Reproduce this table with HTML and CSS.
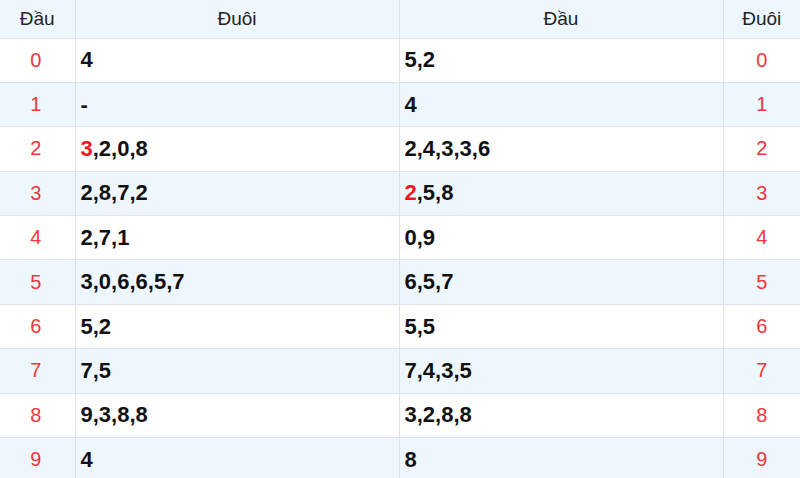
FILE: index.html
```html
<!DOCTYPE html>
<html lang="vi">
<head>
<meta charset="utf-8">
<link rel="stylesheet" href="styles.css">
</head>
<body>
<table class="loto">
  <colgroup>
    <col class="c-num"><col class="c-wide"><col class="c-wide"><col class="c-num2">
  </colgroup>
  <thead>
    <tr><th>Đầu</th><th>Đuôi</th><th>Đầu</th><th>Đuôi</th></tr>
  </thead>
  <tbody>
    <tr><td class="idx">0</td><td class="val">4</td><td class="val">5,2</td><td class="idx">0</td></tr>
    <tr><td class="idx">1</td><td class="val">-</td><td class="val">4</td><td class="idx">1</td></tr>
    <tr><td class="idx">2</td><td class="val"><span class="hl">3</span>,2,0,8</td><td class="val">2,4,3,3,6</td><td class="idx">2</td></tr>
    <tr><td class="idx">3</td><td class="val">2,8,7,2</td><td class="val"><span class="hl">2</span>,5,8</td><td class="idx">3</td></tr>
    <tr><td class="idx">4</td><td class="val">2,7,1</td><td class="val">0,9</td><td class="idx">4</td></tr>
    <tr><td class="idx">5</td><td class="val">3,0,6,6,5,7</td><td class="val">6,5,7</td><td class="idx">5</td></tr>
    <tr><td class="idx">6</td><td class="val">5,2</td><td class="val">5,5</td><td class="idx">6</td></tr>
    <tr><td class="idx">7</td><td class="val">7,5</td><td class="val">7,4,3,5</td><td class="idx">7</td></tr>
    <tr><td class="idx">8</td><td class="val">9,3,8,8</td><td class="val">3,2,8,8</td><td class="idx">8</td></tr>
    <tr><td class="idx">9</td><td class="val">4</td><td class="val">8</td><td class="idx">9</td></tr>
  </tbody>
</table>
</body>
</html>
```
FILE: styles.css
```css
html, body {
  margin: 0;
  padding: 0;
  background: #ffffff;
  overflow: hidden;
}
body {
  font-family: "Liberation Sans", Arial, sans-serif;
  color: #000;
}
.loto {
  width: 800px;
  border-collapse: collapse;
  table-layout: fixed;
}
.c-num { width: 75px; }
.c-wide { width: 324px; }
.c-num2 { width: 77px; }
.loto th, .loto td {
  border: 1px solid #dde3ea;
  padding: 0 5px;
}
.loto tr:first-child th { border-top: none; }
.loto th:first-child, .loto td:first-child { border-left: none; }
.loto th:last-child, .loto td:last-child { border-right: none; }
.loto thead tr {
  background: #eef6fe;
  height: 38px;
}
.loto th {
  font-weight: normal;
  font-size: 19px;
  color: #222;
  text-align: center;
}
.loto tbody tr {
  height: 44.4px;
  background: #ffffff;
}
.loto tbody tr:nth-child(even) {
  background: #eff7fe;
}
.idx {
  text-align: center;
  color: #f4333a;
  font-size: 20px;
}
.idx:first-child {
  padding-right: 8px;
}
.val {
  text-align: left;
  font-weight: bold;
  font-size: 22px;
  color: #111;
}
.hl {
  color: #f0141c;
}
```
